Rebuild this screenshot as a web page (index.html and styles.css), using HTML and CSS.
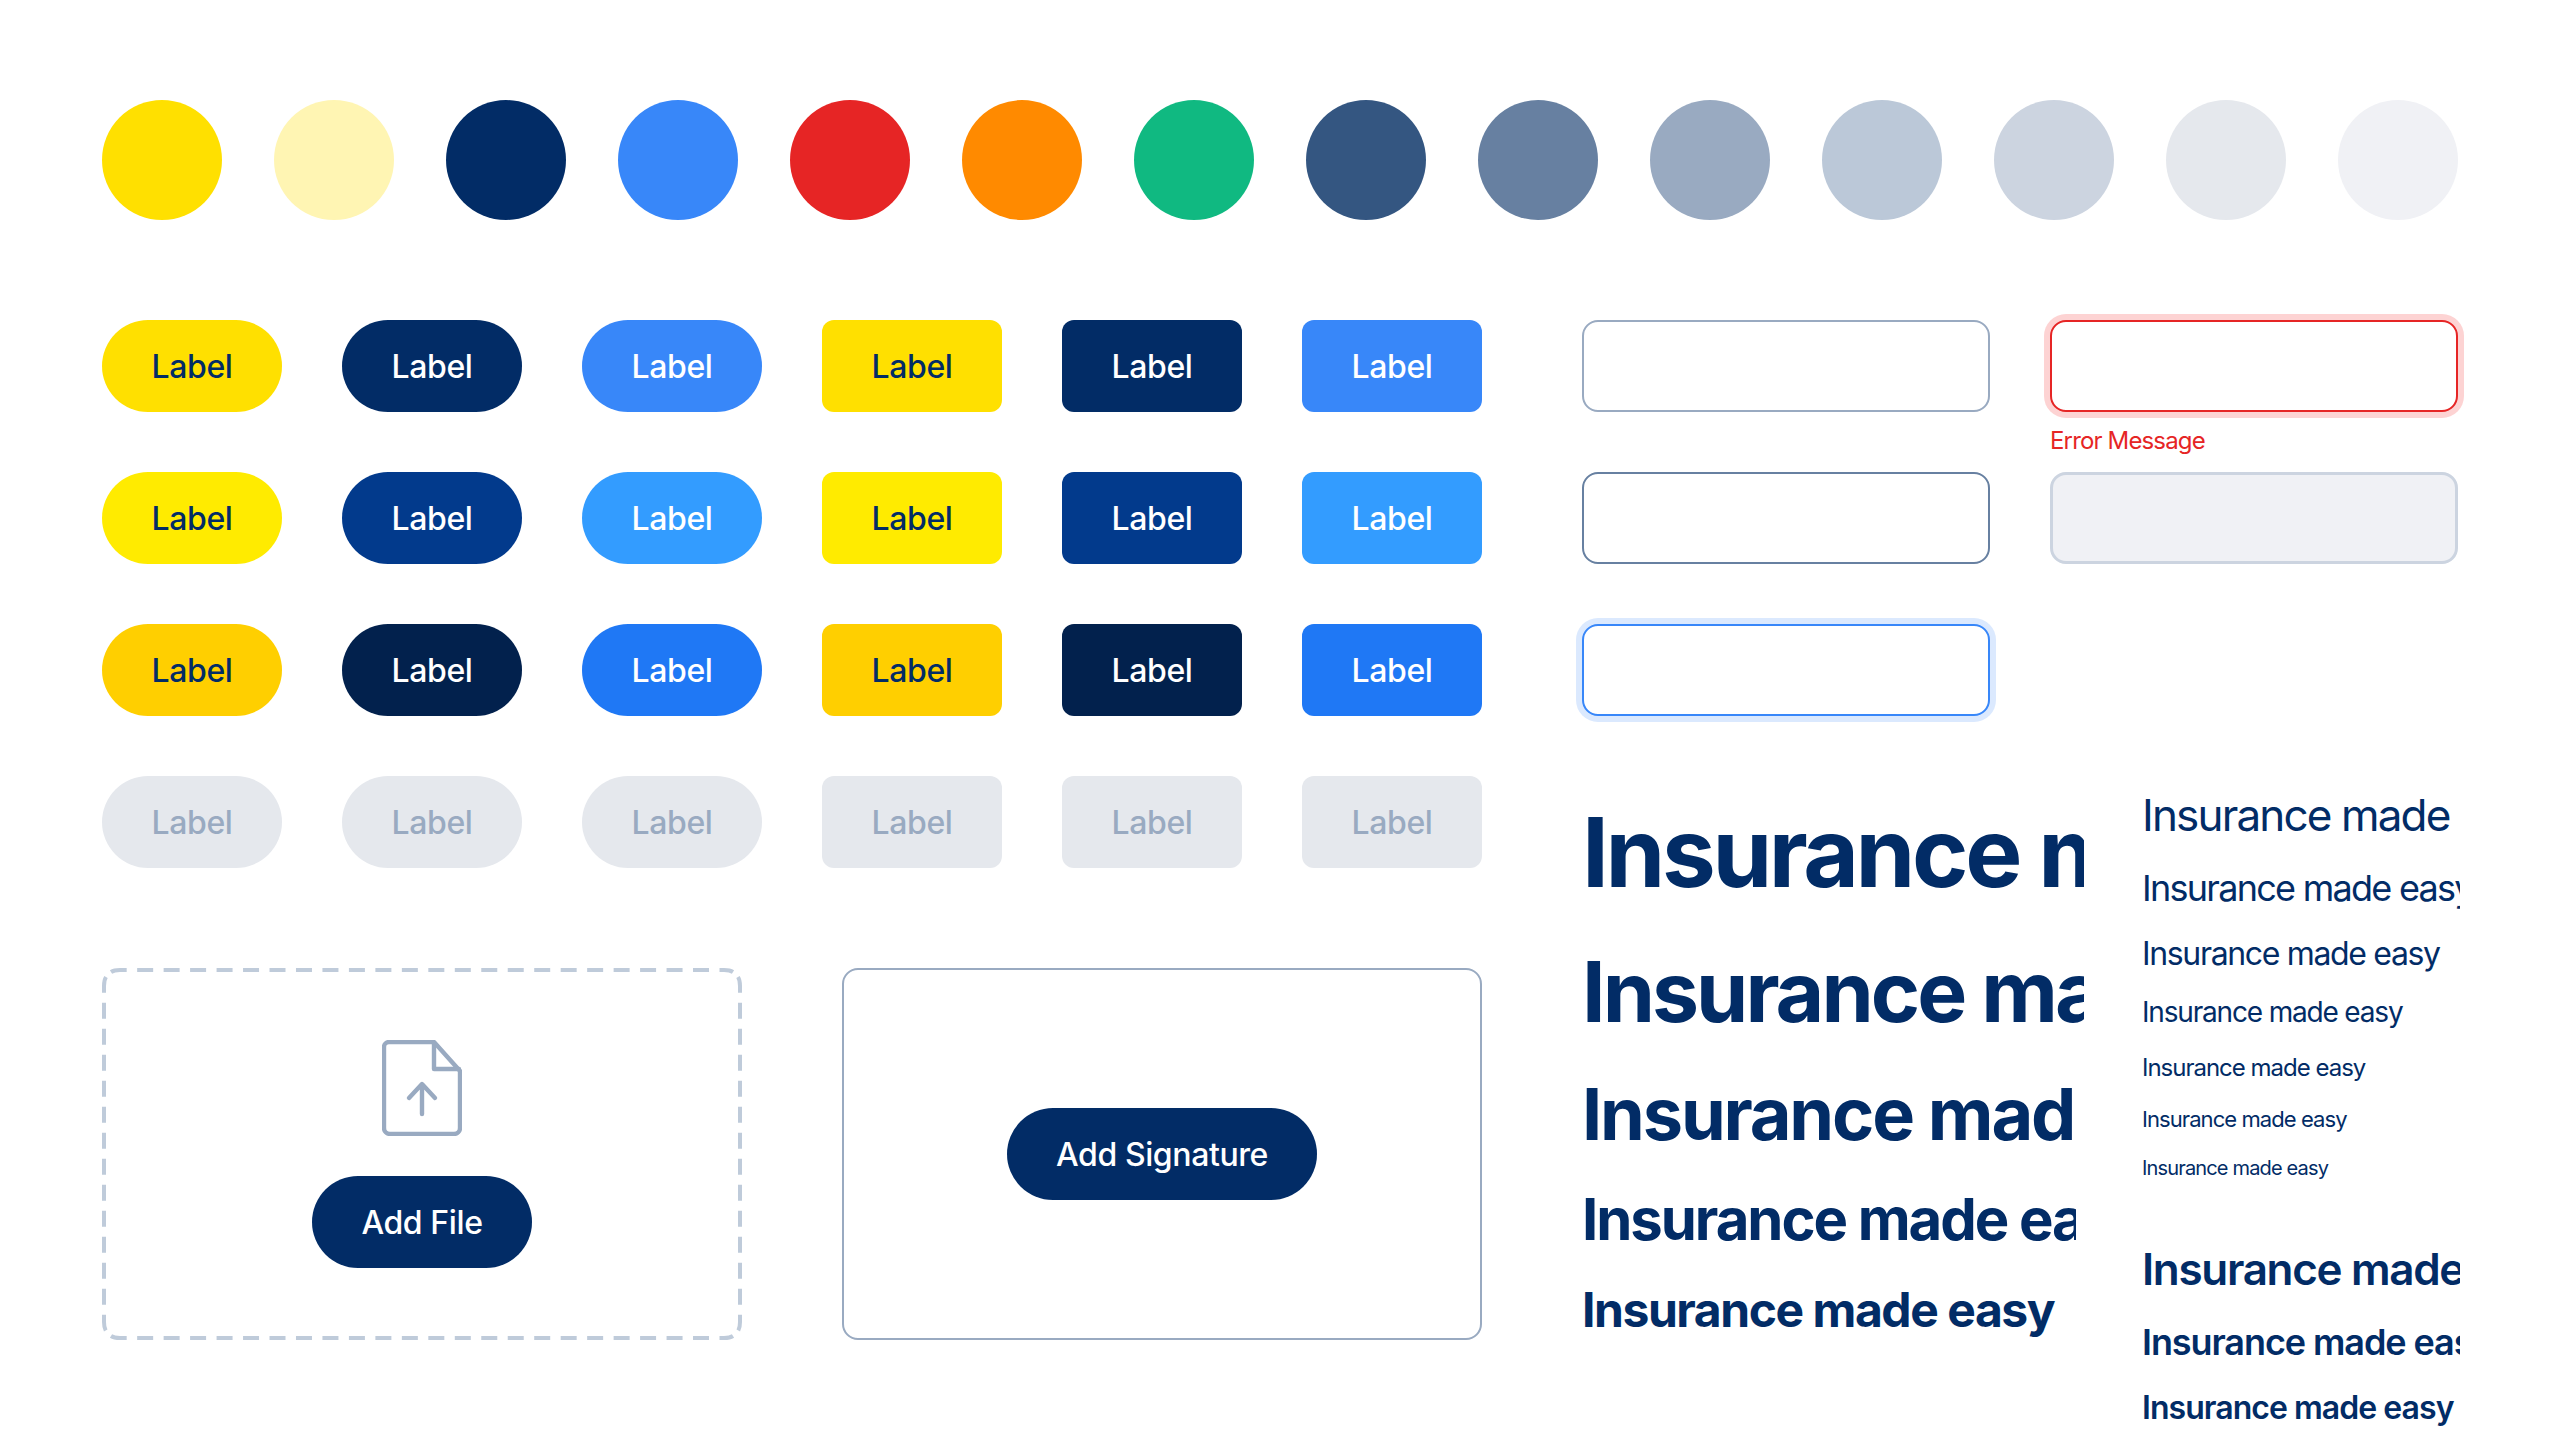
FILE: index.html
```html
<!DOCTYPE html>
<html lang="en">
<head>
<meta charset="utf-8">
<title>Insurance UI Kit</title>
<link rel="stylesheet" href="styles.css">
</head>
<body>
<main class="page">
  <section class="swatches">
    <span class="swatch c-yellow"></span><span class="swatch c-paleyellow"></span><span class="swatch c-navy"></span><span class="swatch c-blue"></span><span class="swatch c-red"></span><span class="swatch c-orange"></span><span class="swatch c-green"></span><span class="swatch c-n700"></span><span class="swatch c-n600"></span><span class="swatch c-n500"></span><span class="swatch c-n400"></span><span class="swatch c-n300"></span><span class="swatch c-n200"></span><span class="swatch c-n100"></span>
  </section>
  <div class="columns">
    <div class="col-left">
      <section class="buttons">
        <button class="btn pill yellow">Label</button><button class="btn pill navy">Label</button><button class="btn pill blue">Label</button><button class="btn yellow">Label</button><button class="btn navy">Label</button><button class="btn blue">Label</button>
        <button class="btn pill yellow-h">Label</button><button class="btn pill navy-h">Label</button><button class="btn pill blue-h">Label</button><button class="btn yellow-h">Label</button><button class="btn navy-h">Label</button><button class="btn blue-h">Label</button>
        <button class="btn pill yellow-a">Label</button><button class="btn pill navy-a">Label</button><button class="btn pill blue-a">Label</button><button class="btn yellow-a">Label</button><button class="btn navy-a">Label</button><button class="btn blue-a">Label</button>
        <button class="btn pill off">Label</button><button class="btn pill off">Label</button><button class="btn pill off">Label</button><button class="btn off">Label</button><button class="btn off">Label</button><button class="btn off">Label</button>
      </section>
      <section class="cards">
        <div class="card drop">
          <svg class="dash" width="640" height="372" viewBox="0 0 640 372" aria-hidden="true">
            <path class="dash-h" d="M9 4Q12 2 18 2H622Q628 2 631 4"/>
            <path class="dash-h" d="M9 368Q12 370 18 370H622Q628 370 631 368"/>
            <path class="dash-v" d="M4 9Q2 12 2 18V354Q2 360 4 363"/>
            <path class="dash-v" d="M636 9Q638 12 638 18V354Q638 360 636 363"/>
          </svg>
          <svg class="file-icon" width="80" height="96" viewBox="0 0 80 96" aria-hidden="true">
            <path d="M7 2H52L78 31V88a6 6 0 0 1-6 6H8a6 6 0 0 1-6-6V7a5 5 0 0 1 5-5Z"/>
            <path d="M52 3V29H77"/>
            <path d="M40 74V45M27 58L40 44L53 58"/>
          </svg>
          <button class="btn pill navy wide-file">Add File</button>
        </div>
        <div class="card sign">
          <button class="btn pill navy wide-sign">Add Signature</button>
        </div>
      </section>
    </div>
    <div class="col-right">
      <section class="inputs">
        <div class="input base"></div>
        <div class="field">
          <div class="input error"></div>
          <p class="error-text">Error Message</p>
        </div>
        <div class="input hover"></div>
        <div class="input disabled"></div>
        <div class="input focus"></div>
      </section>
      <section class="type">
        <div class="type-col heads">
          <p class="t h1">Insurance made easy</p>
          <p class="t h2">Insurance made easy</p>
          <p class="t h3">Insurance made easy</p>
          <p class="t h4">Insurance made easy</p>
          <p class="t h5">Insurance made easy</p>
        </div>
        <div class="type-col body">
          <p class="t b44">Insurance made easy</p>
          <p class="t b36">Insurance made easy</p>
          <p class="t b32">Insurance made easy</p>
          <p class="t b28">Insurance made easy</p>
          <p class="t b24">Insurance made easy</p>
          <p class="t b22">Insurance made easy</p>
          <p class="t b20">Insurance made easy</p>
          <p class="t s44">Insurance made easy</p>
          <p class="t s36">Insurance made easy</p>
          <p class="t s32">Insurance made easy</p>
        </div>
      </section>
    </div>
  </div>
</main>
</body>
</html>
```

FILE: styles.css
```css
* { box-sizing: border-box; }
html, body { margin: 0; background: #fff; }
body { font-family: "Inter", "Noto Sans", sans-serif; color: #022c66; }
.page { width: 2560px; height: 1440px; overflow: hidden; padding: 100px 102px 0; }

.swatches { display: flex; gap: 52px; }
.swatch { width: 120px; height: 120px; border-radius: 50%; flex: none; }
.c-yellow { background: #ffe000; }
.c-paleyellow { background: #fff5b3; }
.c-navy { background: #022c66; }
.c-blue { background: #3887f9; }
.c-red { background: #e62525; }
.c-orange { background: #ff8a00; }
.c-green { background: #10b981; }
.c-n700 { background: #345681; }
.c-n600 { background: #6780a1; }
.c-n500 { background: #99aac1; }
.c-n400 { background: #bbc8d8; }
.c-n300 { background: #ccd4e0; }
.c-n200 { background: #e5e8ed; }
.c-n100 { background: #f0f1f5; }

.columns { display: flex; gap: 100px; margin-top: 100px; align-items: flex-start; }
.col-left { width: 1380px; flex: none; }
.col-right { width: 876px; flex: none; }

.buttons { display: grid; grid-template-columns: repeat(6, 180px); gap: 60px; }
.btn { height: 92px; width: 180px; border: 0; border-radius: 12px; font: 500 32px/1 "Inter", sans-serif; letter-spacing: -.4px; padding: 2px 0 0; }
.pill { border-radius: 46px; }
.yellow { background: #ffe000; color: #022c66; }
.navy { background: #022c66; color: #fff; }
.blue { background: #3887f9; color: #fff; }
.yellow-h { background: #ffeb00; color: #022c66; }
.navy-h { background: #023a8c; color: #fff; }
.blue-h { background: #339cff; color: #fff; }
.yellow-a { background: #ffcf00; color: #022c66; }
.navy-a { background: #02214d; color: #fff; }
.blue-a { background: #1f78f5; color: #fff; }
.off { background: #e5e8ed; color: #99aac1; }

.cards { display: flex; gap: 100px; margin-top: 100px; }
.card { width: 640px; height: 372px; display: flex; flex-direction: column; align-items: center; justify-content: center; position: relative; }
.dash { position: absolute; inset: 0; fill: none; stroke: #bfcbda; stroke-width: 4; }
.dash-h { stroke-dasharray: 16 10.47; }
.dash-v { stroke-dasharray: 16 10; }
.file-icon { fill: none; stroke: #99aac1; stroke-width: 4.4; stroke-linecap: round; stroke-linejoin: round; margin-bottom: 40px; }
.sign { border: 2px solid #99aac1; border-radius: 16px; }
.wide-file { width: 220px; }
.wide-sign { width: 310px; }

.inputs { display: grid; grid-template-columns: repeat(2, 408px); column-gap: 60px; row-gap: 60px; }
.field { position: relative; }
.input { height: 92px; border: 2px solid #99aac1; border-radius: 16px; background: #fff; }
.hover { border-color: #6780a1; }
.disabled { border: 3px solid #ccd4e0; background: #f0f1f5; }
.focus { border-color: #3887f9; box-shadow: 0 0 0 6px #dbe9fe; }
.error { border-color: #e62525; box-shadow: 0 0 0 6px #fdd3d3; }
.error-text { position: absolute; left: 0; top: 106px; margin: 0; font-size: 24px; line-height: 30px; letter-spacing: -.85px; color: #e62525; }

.type { display: flex; gap: 58px; margin-top: 60px; }
.type-col { min-width: 0; flex: none; }
.heads { width: 502px; }
.body { width: 318px; }
.t { margin: 0; white-space: nowrap; overflow: hidden; }
.heads .t { font-weight: 700; letter-spacing: -.035em; }
.heads .h3, .heads .h5 { letter-spacing: -.03em; }
.body .t { letter-spacing: -.042em; }
.h1 { font-size: 96px; line-height: 112px; margin-top: 20px; }
.h2 { font-size: 84px; line-height: 96px; margin-top: 36px; }
.h3 { font-size: 72px; line-height: 84px; margin-top: 32px; width: 490px; }
.h4 { font-size: 58px; line-height: 68px; margin-top: 29px; width: 494px; }
.h5 { font-size: 48px; line-height: 60px; margin-top: 27px; }
.b44 { font-size: 44px; line-height: 52px; margin-top: 13px; }
.body .b36 { font-size: 36px; line-height: 44px; margin-top: 25px; letter-spacing: -.048em; }
.b32 { font-size: 32px; line-height: 40px; margin-top: 24px; }
.b28 { font-size: 28px; line-height: 36px; margin-top: 20px; }
.b24 { font-size: 24px; line-height: 32px; margin-top: 22px; }
.b22 { font-size: 22px; line-height: 30px; margin-top: 20px; }
.b20 { font-size: 20px; line-height: 28px; margin-top: 20px; }
.body .s44, .body .s36, .body .s32 { font-weight: 600; letter-spacing: -.03em; }
.s44 { font-size: 44px; line-height: 52px; margin-top: 61px; }
.s36 { font-size: 36px; line-height: 44px; margin-top: 25px; }
.s32 { font-size: 32px; line-height: 40px; margin-top: 24px; }
```
